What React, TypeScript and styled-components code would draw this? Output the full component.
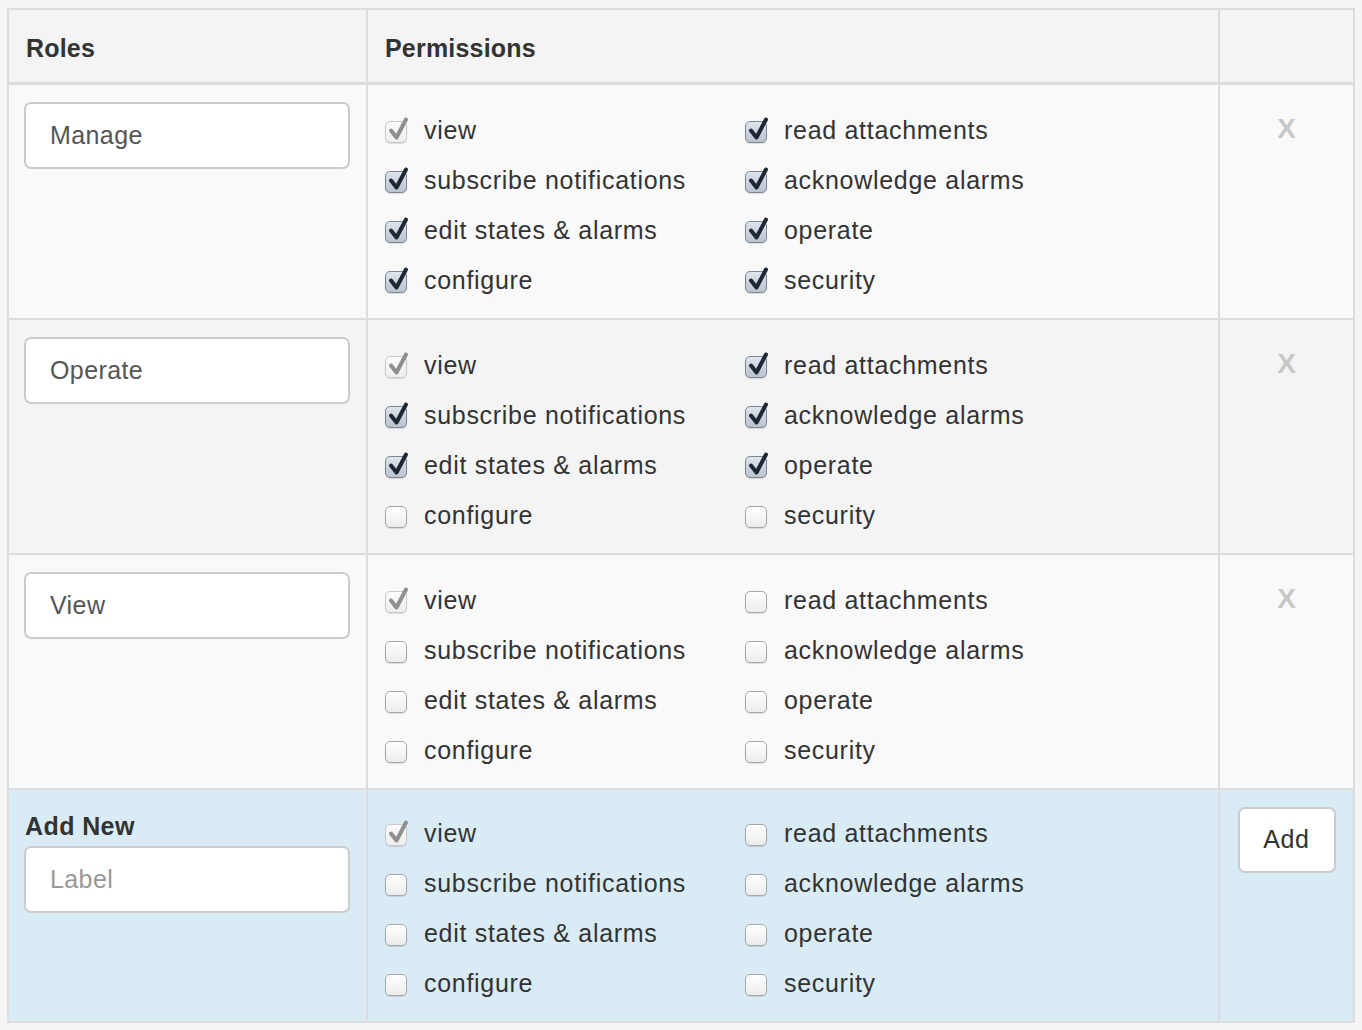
import React from "react";
import styled, { createGlobalStyle } from "styled-components";

const Global = createGlobalStyle`
  html, body { margin: 0; padding: 0; background: #f5f5f5; }
  body { font-family: "Liberation Sans", Arial, Helvetica, sans-serif; color: #333; }
  #root { padding: 8px 0 0 7px; }
`;

const Table = styled.table`
  border-collapse: collapse;
  width: 1348px;
  table-layout: fixed;
  border: 2px solid #dddddd;
`;

const HeadCell = styled.th`
  background: #f4f4f4;
  text-align: left;
  font-size: 25px;
  letter-spacing: 0.2px;
  font-weight: bold;
  color: #333;
  height: 74px;
  padding: 5px 17px 0 17px;
  border-left: 2px solid #dddddd;
  border-bottom: 3px solid #dddddd;
  box-sizing: border-box;
  vertical-align: middle;
`;

const Row = styled.tr<{ $bg: string }>`
  background: ${(p) => p.$bg};
  border-top: 2px solid #dddddd;
`;

const RoleCell = styled.td`
  vertical-align: top;
  padding: 17px 15px 0 15px;
  border-left: 2px solid #dddddd;
`;

const PermCell = styled.td<{ $top: number }>`
  vertical-align: top;
  padding: ${(p) => p.$top}px 17px 12px 17px;
  border-left: 2px solid #dddddd;
`;

const ActionCell = styled.td`
  vertical-align: top;
  text-align: center;
  padding: 17px 0 0 0;
  border-left: 2px solid #dddddd;
`;

const TextInput = styled.input`
  display: block;
  box-sizing: border-box;
  width: 326px;
  height: 67px;
  padding: 0 24px;
  font-family: "Liberation Sans", Arial, Helvetica, sans-serif;
  font-size: 25px;
  letter-spacing: 0.4px;
  color: #555;
  background: #fff;
  border: 2px solid #cccccc;
  border-radius: 7px;
  outline: none;
  &::placeholder { color: #999; }
`;

const AddLabel = styled.div`
  font-size: 25px;
  font-weight: bold;
  letter-spacing: 0.4px;
  color: #333;
  line-height: 28px;
  margin: 5px 0 6px 1px;
`;

const PermGrid = styled.div`
  display: grid;
  grid-template-columns: 360px 360px;
  grid-auto-rows: 50px;
`;

const PermItem = styled.label`
  display: flex;
  align-items: center;
  gap: 17px;
  font-size: 25px;
  letter-spacing: 0.7px;
  color: #333;
`;

const Box = styled.span<{ $checked: boolean; $disabled: boolean }>`
  position: relative;
  display: inline-block;
  width: 20px;
  height: 20px;
  margin-top: 3px;
  flex: none;
  border-radius: 5px;
  border: 1px solid ${(p) => (p.$disabled ? "#c9c9c9" : p.$checked ? "#7d8792" : "#a7a7a7")};
  background: ${(p) =>
    p.$disabled
      ? "linear-gradient(#fbfbfb, #eeeeee)"
      : p.$checked
      ? "linear-gradient(#dfe5ec, #b9c3ce)"
      : "linear-gradient(#ffffff, #ececec)"};
  box-shadow: 0 1px 1px rgba(0, 0, 0, 0.12);
`;

const Check = styled.svg<{ $disabled: boolean }>`
  position: absolute;
  left: 1px;
  top: -6px;
  width: 24px;
  height: 26px;
  stroke: ${(p) => (p.$disabled ? "#8f8f8f" : "#1e2835")};
`;

const RemoveX = styled.span`
  display: inline-block;
  font-size: 28px;
  font-weight: bold;
  color: #c8c8c8;
  line-height: 22px;
  margin-top: 16px;
  cursor: pointer;
`;

const AddButton = styled.button`
  box-sizing: border-box;
  width: 98px;
  height: 66px;
  font-family: "Liberation Sans", Arial, Helvetica, sans-serif;
  font-size: 25px;
  letter-spacing: 0.6px;
  color: #333;
  background: #fff;
  border: 2px solid #cccccc;
  border-radius: 7px;
`;

const PERMS = [
  "view",
  "read attachments",
  "subscribe notifications",
  "acknowledge alarms",
  "edit states & alarms",
  "operate",
  "configure",
  "security",
];

function Checkbox({ checked, disabled }: { checked: boolean; disabled: boolean }) {
  return (
    <Box $checked={checked} $disabled={disabled}>
      {checked && (
        <Check $disabled={disabled} viewBox="0 0 24 26" fill="none" strokeWidth={4} strokeLinecap="round" strokeLinejoin="round">
          <path d="M4 14.5 L9.5 21.5 L19 3.5" />
        </Check>
      )}
    </Box>
  );
}

function Permissions({ checked }: { checked: string[] }) {
  return (
    <PermGrid>
      {PERMS.map((p) => (
        <PermItem key={p}>
          <Checkbox checked={p === "view" || checked.includes(p)} disabled={p === "view"} />
          {p}
        </PermItem>
      ))}
    </PermGrid>
  );
}

const ROLES = [
  { name: "Manage", bg: "#f9f9f9", checked: PERMS },
  {
    name: "Operate",
    bg: "#f4f4f4",
    checked: ["read attachments", "subscribe notifications", "acknowledge alarms", "edit states & alarms", "operate"],
  },
  { name: "View", bg: "#f9f9f9", checked: [] as string[] },
];

export default function App() {
  return (
    <>
      <Global />
      <Table>
        <colgroup>
          <col style={{ width: 359 }} />
          <col style={{ width: 852 }} />
          <col />
        </colgroup>
        <thead>
          <tr>
            <HeadCell>Roles</HeadCell>
            <HeadCell>Permissions</HeadCell>
            <HeadCell />
          </tr>
        </thead>
        <tbody>
          {ROLES.map((r) => (
            <Row key={r.name} $bg={r.bg}>
              <RoleCell>
                <TextInput defaultValue={r.name} />
              </RoleCell>
              <PermCell $top={21}>
                <Permissions checked={r.checked} />
              </PermCell>
              <ActionCell>
                <RemoveX>X</RemoveX>
              </ActionCell>
            </Row>
          ))}
          <Row $bg="#d9ecf5">
            <RoleCell>
              <AddLabel>Add New</AddLabel>
              <TextInput placeholder="Label" />
            </RoleCell>
            <PermCell $top={19}>
              <Permissions checked={[]} />
            </PermCell>
            <ActionCell>
              <AddButton>Add</AddButton>
            </ActionCell>
          </Row>
        </tbody>
      </Table>
    </>
  );
}
